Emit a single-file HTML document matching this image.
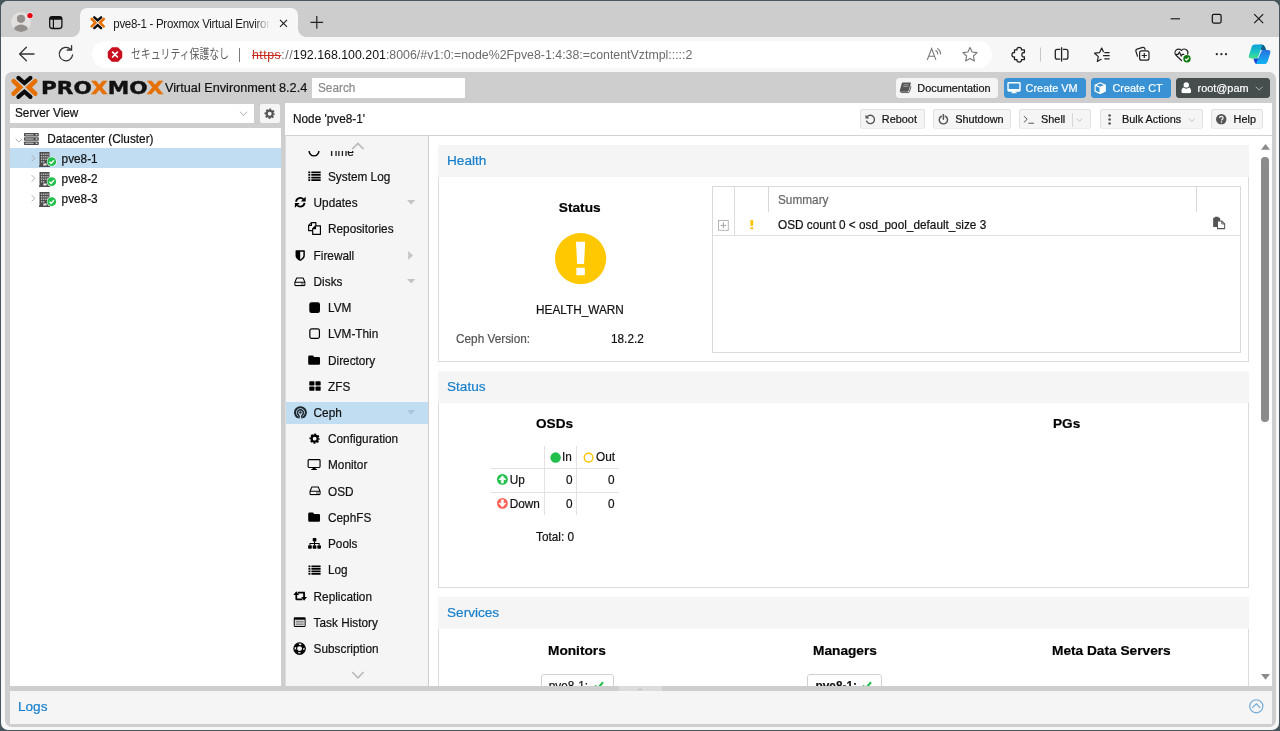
<!DOCTYPE html>
<html lang="ja">
<head>
<meta charset="utf-8">
<title>pve8-1 - Proxmox Virtual Environment</title>
<style>
*{box-sizing:border-box;margin:0;padding:0}
html,body{width:1280px;height:731px;overflow:hidden;background:#47555d}
body{font-family:"Liberation Sans","Noto Sans CJK JP",sans-serif;font-size:11.8px;color:#111;position:relative}
.a{position:absolute}
.t{position:absolute;white-space:pre;line-height:1}
svg{position:absolute;overflow:visible;fill:currentColor}
#win{will-change:transform;left:1px;top:1px;width:1278px;height:729px;border-radius:7px;background:#f7f7f7;overflow:hidden}
#win>.o{left:-1px;top:-1px;width:1280px;height:731px}
#tabbar{left:0;top:0;width:1280px;height:37px;background:#cdcdcd}
#tab{left:80px;top:8px;width:217.6px;height:30px;background:#f7f7f7;border-radius:7px 7px 0 0}
#tab:before,#tab:after{content:"";position:absolute;bottom:1px;width:8px;height:8px;background:radial-gradient(circle at 0 0,rgba(247,247,247,0) 7.5px,#f7f7f7 8px)}
#tab:before{left:-8px}
#tab:after{right:-8px;transform:scaleX(-1)}
#addr{left:92px;top:41px;width:900px;height:27px;border-radius:14px;background:#fff}
#page{left:5px;top:72px;width:1271px;height:655px;border-radius:7px;background:#cecece;overflow:hidden}
#page>.o{left:-5px;top:-72px;width:1280px;height:731px}
.btn{position:absolute;height:20px;border-radius:3px;background:#f5f5f5;border:1px solid #e1e1e1;border-bottom-color:#ececec;font-size:10.9px}
.nb{border-color:#f5f5f5}
.btn .t{top:2.6px}
.blue{background:#3892d4;border-color:#3892d4;color:#fff}
.dark{background:#464d4d;border-color:#464d4d;color:#fff}
.nav{position:absolute;left:286px;width:142px;height:21px}
.nav .t{top:5px;font-size:11.8px}
.nav.sel{background:#c1ddf1}
.hd{position:absolute;left:438px;width:811px;background:#f5f5f5;height:32px}
.hd .t{left:9px;top:9px;font-size:13.6px;color:#157fcc}
.pb{position:absolute;left:438px;width:811px;background:#fff;border:1px solid #dcdcdc;border-top:0}
.row{position:absolute;left:10px;width:271px;height:20px}
.row .t{top:4px;font-size:11.8px}
.h3{font-weight:bold;font-size:13.6px;color:#000}
#page .t{margin-top:1.3px;transform:scaleY(1.12);transform-origin:0 84.65%;-webkit-text-stroke:.2px}
#page .hd .t,#page .h3{margin-top:0;transform:none}
#page .btn .t{transform:scaleY(1.03)}
</style>
</head>
<body>
<svg width="0" height="0" style="position:absolute;left:-10px;top:-10px">
<defs>
<symbol id="i-list" viewBox="0 0 14 12"><path d="M0 .6h2.2v2H0zM3.4 .6H14v2H3.4zM0 3.5h2.2v2H0zM3.4 3.5H14v2H3.4zM0 6.4h2.2v2H0zM3.4 6.4H14v2H3.4zM0 9.3h2.2v2H0zM3.4 9.3H14v2H3.4z"/></symbol>
<symbol id="i-refresh" viewBox="0 0 14 14"><path d="M2.3 6.4A4.8 4.8 0 0 1 10.6 3.7" fill="none" stroke="currentColor" stroke-width="2"/><path d="M13 .8v5.4H7.6z"/><path d="M11.7 7.6A4.8 4.8 0 0 1 3.4 10.3" fill="none" stroke="currentColor" stroke-width="2"/><path d="M1 13.2V7.8h5.4z"/></symbol>
<symbol id="i-files" viewBox="0 0 14 14"><path d="M8.4 3.6V.7H3.7L.7 3.7v5.6h4.2M3.7 .7v3H.7M8 4.1h5.3v9.2H5V7.1zM8 4.1v3H5" fill="none" stroke="currentColor" stroke-width="1.25" stroke-linejoin="round"/></symbol>
<symbol id="i-shield" viewBox="0 0 12 13"><path fill-rule="evenodd" d="M.6 .8Q.6 .3 1.1 .3H10.9Q11.4 .3 11.4 .8V6.5C11.4 9.8 8.2 11.9 6 12.8C3.8 11.9 .6 9.8 .6 6.5ZM6 2.1V10.9C7.6 10.1 9.7 8.6 9.7 6.5V2.1Z"/></symbol>
<symbol id="i-hdd" viewBox="0 0 14 12"><path d="M3 1.2h8l2.3 5.3v3.3a1 1 0 0 1-1 1H1.7a1 1 0 0 1-1-1V6.5zM.9 6.6h12.2" fill="none" stroke="currentColor" stroke-width="1.3" stroke-linejoin="round"/><path d="M8.2 8.1h3.6v1.4H8.2z" opacity=".75"/></symbol>
<symbol id="i-square" viewBox="0 0 12 12"><rect x=".3" y=".3" width="11.4" height="11.4" rx="2.4"/></symbol>
<symbol id="i-square-o" viewBox="0 0 12 12"><rect x=".9" y=".9" width="10.2" height="10.2" rx="2" fill="none" stroke="currentColor" stroke-width="1.3"/></symbol>
<symbol id="i-folder" viewBox="0 0 14 12"><path d="M0 2.1A1.6 1.6 0 0 1 1.6 .5H5A1.6 1.6 0 0 1 6.6 2.1V2.5H12.4A1.6 1.6 0 0 1 14 4.1V10A1.6 1.6 0 0 1 12.4 11.6H1.6A1.6 1.6 0 0 1 0 10Z"/></symbol>
<symbol id="i-th" viewBox="0 0 14 12"><rect x=".2" y=".3" width="6.1" height="5" rx="1"/><rect x="7.5" y=".3" width="6.1" height="5" rx="1"/><rect x=".2" y="6.5" width="6.1" height="5" rx="1"/><rect x="7.5" y="6.5" width="6.1" height="5" rx="1"/></symbol>
<symbol id="i-ceph" viewBox="0 0 14 14"><g fill="none" stroke="currentColor" stroke-linecap="round"><path d="M3.6 12A5.9 5.9 0 1 1 10.4 12" stroke-width="2.2"/><path d="M5.3 12.8C6 11.5 5.7 10.6 5 9.800A3.200 3.200 0 1 1 9 9.800C8.300 10.600 8 11.500 8.700 12.800" stroke-width="1.600"/></g><circle cx="7" cy="7.100" r="1.300"/></symbol>
<symbol id="i-gear" viewBox="0 0 14 14"><circle cx="7" cy="7" r="3.75" fill="none" stroke="currentColor" stroke-width="2.7"/><circle cx="7" cy="7" r="5.4" fill="none" stroke="currentColor" stroke-width="2" stroke-dasharray="2.3 1.941" stroke-dashoffset="1.15"/></symbol>
<symbol id="i-desktop" viewBox="0 0 15 13"><path d="M1.7 .7h11.6a1 1 0 0 1 1 1v7a1 1 0 0 1-1 1H1.7a1 1 0 0 1-1-1v-7a1 1 0 0 1 1-1z" fill="none" stroke="currentColor" stroke-width="1.3"/><path d="M6 9.7h3l.4 1.8h1.3v1H4.3v-1h1.3z"/></symbol>
<symbol id="i-desktop-f" viewBox="0 0 15 13"><path d="M1.5 0h12A1.5 1.5 0 0 1 15 1.5v7.8a1.5 1.5 0 0 1-1.5 1.5H9.2l.3 1.1h1.2v1.1H4.3v-1.1h1.2l.3-1.1H1.5A1.5 1.5 0 0 1 0 9.3V1.5A1.5 1.5 0 0 1 1.5 0zM1.6 1.6v6.2h11.8V1.6z" fill-rule="evenodd"/></symbol>
<symbol id="i-sitemap" viewBox="0 0 14 12"><rect x="5" y="0" width="4" height="3.8" rx=".8"/><rect x="0" y="7.8" width="4" height="3.8" rx=".8"/><rect x="5" y="7.8" width="4" height="3.8" rx=".8"/><rect x="10" y="7.8" width="4" height="3.8" rx=".8"/><path d="M7 3.5v4.5M2 8V5.9h10V8" fill="none" stroke="currentColor" stroke-width="1.1"/></symbol>
<symbol id="i-retweet" viewBox="0 0 15 11"><path d="M3.2 9.7V3M5 1.8h6.7v4.6M11.8 8V1.8M10 9.3H3.2" fill="none" stroke="currentColor" stroke-width="1.9"/><path d="M0 4.3L3.2 .4l3.2 3.9zM15 6.7l-3.2 3.9-3.2-3.9z"/></symbol>
<symbol id="i-listalt" viewBox="0 0 14 12"><path fill-rule="evenodd" d="M1.3 .3h11.4a1.3 1.3 0 0 1 1.3 1.3v8.8a1.3 1.3 0 0 1-1.3 1.3H1.3A1.3 1.3 0 0 1 0 10.4V1.6A1.3 1.3 0 0 1 1.3 .3zM1.2 3.2v7.3h11.6V3.2z"/><path d="M2.2 4.4h9.6v1.3H2.2zM2.2 6.4h9.6v1.3H2.2zM2.2 8.4h9.6v1.3H2.2z" opacity=".55"/></symbol>
<symbol id="i-lifering" viewBox="0 0 14 14"><circle cx="7" cy="7" r="4.600" fill="none" stroke="currentColor" stroke-width="2.300" stroke-dasharray="4.726 2.500" stroke-dashoffset="-1.250"/><circle cx="7" cy="7" r="6" fill="none" stroke="currentColor" stroke-width="1.400"/><circle cx="7" cy="7" r="3.200" fill="none" stroke="currentColor" stroke-width="1.200"/></symbol>
<symbol id="i-clock" viewBox="0 0 14 14"><circle cx="7" cy="7" r="5.7" fill="none" stroke="currentColor" stroke-width="1.7"/></symbol>
<symbol id="i-book" viewBox="0 0 14 13"><path d="M4.3 .5h8.2c.7 0 1 .5.8 1.1L10.8 10c-.2.6-.8 1-1.4 1H2.3C1.4 11 .6 10.2.9 9.2L3 1.7C3.2 1 3.7.5 4.3.5z"/><path d="M1.3 10.6c.1.7.7 1.4 1.7 1.4h7.2c.7 0 1.2-.4 1.5-1.1l2-6.5" fill="none" stroke="currentColor" stroke-width="1.1"/><path d="M5.2 3.1h5.6M4.7 5h5.6" stroke="#f5f5f5" stroke-width=".7" opacity=".7"/></symbol>
<symbol id="i-cube" viewBox="0 0 14 14"><path fill-rule="evenodd" d="M7 .3L13.4 3v7.8L7 13.7.6 10.8V3zM7 1.8L2.9 3.5 7 5.3l4.1-1.8zM1.9 4.6v5.4L6.3 12V6.5z"/></symbol>
<symbol id="i-user" viewBox="0 0 12 13"><circle cx="6" cy="3.3" r="3.1"/><path d="M2.8 6.3c.9.9 2 1.3 3.2 1.3s2.3-.4 3.2-1.3c1.7.5 2.3 2.3 2.3 4.4 0 1.2-.8 2-1.9 2H2.4c-1.1 0-1.9-.8-1.9-2 0-2.1.6-3.9 2.3-4.4z"/></symbol>
<symbol id="i-undo" viewBox="0 0 13 13"><path d="M2.6 3.3A5 5 0 1 1 1.6 8" fill="none" stroke="currentColor" stroke-width="1.7"/><path d="M.6 .9v4.6h4.6z"/></symbol>
<symbol id="i-power" viewBox="0 0 13 13"><path d="M4 2.7A5 5 0 1 0 9 2.7" fill="none" stroke="currentColor" stroke-width="1.8" stroke-linecap="round"/><path d="M6.5 .7v5.5" stroke="currentColor" stroke-width="1.8" stroke-linecap="round"/></symbol>
<symbol id="i-term" viewBox="0 0 13 10"><path d="M1 1.2l3.8 3.5L1 8.2M6 9.2h6.5" fill="none" stroke="currentColor" stroke-width="1.1"/></symbol>
<symbol id="i-dots" viewBox="0 0 3 11"><circle cx="1.5" cy="1.5" r="1.3"/><circle cx="1.5" cy="5.5" r="1.3"/><circle cx="1.5" cy="9.5" r="1.3"/></symbol>
<symbol id="i-chev" viewBox="0 0 10 6"><path d="M.8 .8L5 5 9.2 .8" fill="none" stroke="currentColor" stroke-width="1.1"/></symbol>
<symbol id="i-help" viewBox="0 0 12 12"><circle cx="6" cy="6" r="6"/><path d="M4.100 4.600c0-1.100.8-1.900 2-1.900 1.100 0 1.900.7 1.900 1.700 0 1.500-1.700 1.500-1.700 2.900" fill="none" stroke="#f5f5f5" stroke-width="1.400"/><circle cx="6.200" cy="9.100" r=".85" fill="#f5f5f5"/></symbol>
<symbol id="i-node" viewBox="0 0 18 15"><path d="M.5 0h10v14H.5z" fill="#4d4d4d"/><path d="M0 13.600h11V15H0z" fill="#4d4d4d"/><g fill="#b9b9b9"><path d="M2 1.500h1.300v1.600H2zM4.100 1.500h1.300v1.600H4.100zM6.200 1.500h1.300v1.600H6.200zM8.300 1.500h1.300v1.600H8.300zM2 4h1.300v1.600H2zM4.100 4h1.300v1.600H4.100zM6.200 4h1.300v1.600H6.200zM8.300 4h1.300v1.600H8.300zM2 6.500h1.300v1.600H2zM4.100 6.500h1.300v1.600H4.100zM6.200 6.500h1.300v1.600H6.200zM8.300 6.500h1.300v1.600H8.300zM2 9h1.300v1.600H2zM4.100 9h1.300v1.600H4.100z"/></g><path d="M4.300 11.600h3.300v2H4.300z" fill="#eee"/><circle cx="12.700" cy="9.700" r="4.900" fill="#fff"/><circle cx="12.700" cy="9.700" r="4.400" fill="#21bf4b"/><path d="M10.500 9.800l1.600 1.600 2.900-3.100" fill="none" stroke="#fff" stroke-width="1.400"/></symbol>
</defs>
</svg>
<div id="win" class="a"><div class="o a">
<div id="tabbar" class="a"></div>
<div id="tab" class="a"></div>
<div class="t" style="left:113.3px;top:18.5px;font-size:11.5px;letter-spacing:-0.3px;color:#1b1b1b;transform:scaleY(1.1);transform-origin:0 84.65%">pve8-1 - Proxmox Virtual Environ</div>
<div class="a" style="left:254px;top:12px;width:19px;height:22px;background:linear-gradient(to right,rgba(247,247,247,0),#f7f7f7 85%)"></div>
<div id="addr" class="a"></div>
<div class="t" style="left:130.5px;top:47.6px;font-size:12.8px;color:#5f5f5f;transform-origin:0 50%;transform:scaleX(.77)">セキュリティ保護なし</div>
<div class="a" style="left:239.4px;top:48px;width:1.1px;height:13.6px;background:#7a7a7a"></div>
<div class="t" style="left:252px;top:48.6px;font-size:12.36px;color:#6b6b6b"><span style="letter-spacing:.5px"><span style="color:#c42b1c;text-decoration:line-through">https</span>://</span><span style="color:#111">192.168.100.201</span>:8006/#v1:0:=node%2Fpve8-1:4:38:=contentVztmpl:::::2</div>
<svg style="left:0;top:0;width:1280px;height:72px" viewBox="0 0 1280 72">
<!-- profile -->
<clipPath id="pc"><circle cx="21" cy="22" r="10"/></clipPath>
<circle cx="21" cy="22" r="10" fill="#e2e0de"/>
<g clip-path="url(#pc)" fill="#918e8b"><circle cx="21" cy="18.800" r="4.100"/><ellipse cx="21" cy="30.200" rx="7.200" ry="5.600"/></g>
<circle cx="30" cy="15.600" r="3.400" fill="#e3eeee"/><circle cx="30" cy="15.600" r="2.700" fill="#e60012"/>
<!-- tab actions -->
<rect x="49.700" y="16.700" width="12.200" height="11.800" rx="2.400" fill="none" stroke="#111" stroke-width="1.300"/>
<path d="M50 19.800v-1a2.200 2.200 0 0 1 2.200-2.200h7.300a2.200 2.200 0 0 1 2.200 2.200v1z" fill="#111"/>
<path d="M53.400 19v9.400" stroke="#111" stroke-width="1.200"/>
<!-- favicon -->
<g fill="none" stroke-linecap="round" stroke-linejoin="miter"><path d="M94.300 17.300L97.700 20.400L101.100 17.300M94.300 28.100L97.700 25L101.100 28.100" stroke="#0b0b0b" stroke-width="2.400"/><path d="M91.700 19L95.400 22.700L91.700 26.400M103.700 19L100 22.700L103.700 26.400" stroke="#e57000" stroke-width="2.600"/></g>
<!-- tab close, new tab -->
<path d="M280 19.800l7 7M287 19.800l-7 7" stroke="#222" stroke-width="1.200" fill="none"/>
<path d="M310.500 22.400h12.600M316.800 16.100v12.600" stroke="#222" stroke-width="1.200" fill="none"/>
<!-- back, refresh -->
<path d="M34 54H19.800M26.400 47.200L19.600 54l6.800 6.800" stroke="#333" stroke-width="1.300" fill="none" stroke-linecap="round" stroke-linejoin="round"/>
<path d="M72.600 54.800a6.700 6.700 0 1 1-2-5.500" stroke="#333" stroke-width="1.300" fill="none" stroke-linecap="round"/>
<path d="M71.600 45.600v4.400h-4.400" stroke="#333" stroke-width="1.300" fill="none" stroke-linecap="round" stroke-linejoin="round"/>
<!-- not secure -->
<polygon points="121.56,57.32 117.72,61.16 112.28,61.16 108.44,57.32 108.44,51.88 112.28,48.04 117.72,48.04 121.56,51.88" fill="#c8101e" stroke="#c8101e" stroke-width="1.400" stroke-linejoin="round"/>
<path d="M112.600 52.200l4.800 4.800M117.400 52.200l-4.800 4.800" stroke="#fff" stroke-width="1.700" stroke-linecap="round"/>
<!-- read aloud -->
<g stroke="#777" fill="none" stroke-width="1.100" stroke-linecap="round"><path d="M927.400 59.600l4.200-11 4.200 11M928.700 56.200h5.800"/><path d="M935.800 50.500a4 4 0 0 1 2 3.400M937.600 48.600a6.400 6.400 0 0 1 3 5.300M936.800 47.200"/></g>
<!-- star -->
<path d="M970 47.400l2.100 4.600 5 .6-3.700 3.400 1 4.900-4.400-2.500-4.400 2.500 1-4.900-3.700-3.400 5-.6z" fill="none" stroke="#777" stroke-width="1.100" stroke-linejoin="round"/>
<!-- extensions -->
<path d="M1014.500 49.900h2.500c-.8-3.300 5.200-3.300 4.400 0h3v2.700c-3.400-.8-3.400 5.200 0 4.400v2.700h-3c.8 3.300-5.200 3.300-4.400 0h-2.500v-2.700c-3.400.8-3.400-5.200 0-4.400z" fill="none" stroke="#222" stroke-width="1.300" stroke-linejoin="round"/>
<path d="M1040.500 47.500v14" stroke="#c6c6c6" stroke-width="1"/>
<!-- split screen -->
<g fill="none" stroke="#222" stroke-width="1.300"><path d="M1060.300 49.400h-3.100a1.900 1.900 0 0 0-1.900 1.900v5.900a1.900 1.900 0 0 0 1.900 1.900h3.100M1062.900 49.400h3.100a1.900 1.900 0 0 1 1.900 1.900v5.900a1.900 1.900 0 0 1-1.900 1.900h-3.100M1061.600 47.200v14.200"/></g>
<!-- favorites -->
<g fill="none" stroke="#222" stroke-width="1.200" stroke-linejoin="round" stroke-linecap="round"><path d="M1103.400 51.700l-1.700-3.700-2.100 4.600-5 .6 3.700 3.400-1 4.900 3.800-2.200"/><path d="M1104.800 52.600h4.400M1103.500 55.700h5.700M1104.800 58.800h4.400"/></g>
<!-- collections -->
<g fill="none" stroke="#222" stroke-width="1.200" stroke-linejoin="round"><path d="M1137.600 56.600l-1.700-5.400a1.700 1.700 0 0 1 1.100-2.100l5.700-1.700a1.700 1.700 0 0 1 2.100 1.100l.4 1.300"/><rect x="1139.600" y="50.800" width="9.400" height="9.400" rx="2"/><path d="M1144.300 52.900v5.200M1141.700 55.500h5.200"/></g>
<!-- browser essentials -->
<g fill="none" stroke="#222" stroke-width="1.200" stroke-linejoin="round" stroke-linecap="round"><path d="M1181.500 60.500l-5.400-5.300a3.600 3.600 0 0 1 5.100-5.100l.3.400.3-.4a3.600 3.600 0 0 1 5.800 4"/><path d="M1175.600 54.300h2.600l1.200-2.400 1.800 4.200 1.100-1.800h1.500"/></g>
<circle cx="1187" cy="58.800" r="3.700" fill="#107c10"/><path d="M1185.200 58.900l1.300 1.300 2.400-2.500" fill="none" stroke="#fff" stroke-width="1.100"/>
<!-- more -->
<g fill="#222"><circle cx="1216.800" cy="54.200" r="1.100"/><circle cx="1221.400" cy="54.200" r="1.100"/><circle cx="1226" cy="54.200" r="1.100"/></g>
<!-- copilot -->
<defs><linearGradient id="cg1" x1="0" y1="0" x2="0" y2="1"><stop offset="0" stop-color="#0ea2dc"/><stop offset=".55" stop-color="#1cc4c0"/><stop offset="1" stop-color="#45e488"/></linearGradient><linearGradient id="cg2" x1="0" y1="0" x2="0" y2="1"><stop offset="0" stop-color="#2b72dc"/><stop offset="1" stop-color="#10b4f6"/></linearGradient></defs>
<path d="M1259.800 44.500c2.600-.4 4.600.4 5.300 2.400l1.200 3.400h-5.200z" fill="#0b5f8e"/>
<path d="M1253.200 58.200h5.600l-1.300 5.800c-1.400 0-2.300-.5-2.800-1.800z" fill="#1b3fd8"/>
<path d="M1254.800 44.500h5.800c1.200 0 1.700.8 1.300 2l-3.700 10.200c-.5 1.300-1.400 1.900-2.700 1.900h-4.300c-1.800 0-2.800-1.300-2.300-3.100l2.600-8.200c.6-1.900 1.600-2.800 3.300-2.800z" fill="url(#cg1)"/>
<path d="M1264 50h4c1.800 0 2.800 1.300 2.300 3.100l-2.600 8.200c-.6 1.900-1.600 2.800-3.300 2.800h-6.900c-1 0-1.400-.7-1-1.800l4.500-10.400c.6-1.300 1.500-1.900 3-1.900z" fill="url(#cg2)"/>
<!-- window controls -->
<path d="M1170.600 18.800h9.400" stroke="#111" stroke-width="1.100"/>
<rect x="1212.300" y="14.300" width="8.800" height="8.800" rx="1.500" fill="none" stroke="#111" stroke-width="1.200"/>
<path d="M1254.200 14.200l9 9M1263.200 14.200l-9 9" stroke="#111" stroke-width="1.100"/>
</svg>

<div id="page" class="a"><div class="o a">
<svg style="left:11px;top:74.500px;width:27px;height:24px" viewBox="0 0 27 24">
<g fill="none" stroke-linecap="round" stroke-linejoin="miter" stroke-miterlimit="10">
<path d="M7.400 2.900L13.400 8L19.400 2.900M7.400 21.800L13.400 16.700L19.400 21.800" stroke="#0b0b0b" stroke-width="4.200"/>
<path d="M2.600 6.100L9.100 12.350L2.600 18.600M24.200 6.100L17.700 12.350L24.200 18.600" stroke="#e57000" stroke-width="4.600"/>
</g>
</svg>
<div class="t" id="pmx" style="left:40.600px;top:77.400px;font-family:'DejaVu Sans',sans-serif;font-weight:bold;font-size:17.800px;transform-origin:0 50%;transform:scaleX(1.215);color:#111;-webkit-text-stroke:.4px">PRO<span style="color:#e57000">X</span>MO<span style="color:#e57000">X</span></div>

<div class="t" style="left:165px;top:81px;font-size:12.7px;transform:none">Virtual Environment 8.2.4</div>
<div class="a" style="left:312px;top:77.5px;width:153px;height:20px;background:#fff"></div>
<div class="t" style="left:318px;top:82px;color:#8a8a8a">Search</div>
<div class="btn nb" style="left:895.5px;top:77.8px;width:102.3px;height:20px"><div class="t" style="left:20.8px">Documentation</div></div>
<svg style="left:899px;top:82px;width:12.5px;height:11.5px;color:#555"><use href="#i-book"/></svg>
<div class="btn blue" style="left:1003.6px;top:77.8px;width:82px;height:20px"><div class="t" style="left:21.0px">Create VM</div></div>
<svg style="left:1007px;top:81.8px;width:14px;height:11.6px;color:#fff"><use href="#i-desktop-f"/></svg>
<div class="btn blue" style="left:1090.6px;top:77.8px;width:80px;height:20px"><div class="t" style="left:20.9px">Create CT</div></div>
<svg style="left:1094.2px;top:81.5px;width:12.4px;height:12.4px;color:#fff"><use href="#i-cube"/></svg>
<div class="btn dark" style="left:1176px;top:77.8px;width:94.4px;height:20px"><div class="t" style="left:20.5px">root@pam</div></div>
<svg style="left:1180.8px;top:81.8px;width:10.6px;height:11.4px;color:#fff"><use href="#i-user"/></svg>
<svg style="left:1255px;top:86px;width:8.4px;height:5px;color:#b8bcbc"><use href="#i-chev"/></svg>
<div class="a" style="left:10px;top:103.5px;width:244px;height:19.5px;background:#fff"></div>
<div class="t" style="left:15px;top:107px;">Server View</div>
<svg style="left:238.5px;top:110.5px;width:9px;height:5.2px;color:#a8a8a8"><use href="#i-chev"/></svg>
<div class="a" style="left:260px;top:103.5px;width:20px;height:19.5px;background:#f5f5f5;border-radius:2px"></div>
<svg style="left:264.3px;top:107.5px;width:11.4px;height:11.4px;color:#555"><use href="#i-gear"/></svg>
<div class="a" style="left:10px;top:128.4px;width:271px;height:558px;background:#fff"></div>
<svg style="left:14.6px;top:137.8px;width:7.8px;height:5px;color:#9a9a9a"><use href="#i-chev"/></svg>
<svg style="left:24.200px;top:133px;width:14.800px;height:12px" viewBox="0 0 15 12"><g fill="#4d4d4d"><rect x="0" y="0" width="15" height="3.400" rx=".8"/><rect x="0" y="4.300" width="15" height="3.400" rx=".8"/><rect x="0" y="8.600" width="15" height="3.400" rx=".8"/></g><g fill="#bbb"><rect x="1.200" y="1.100" width="8.500" height="1.200"/><rect x="1.200" y="5.400" width="8.500" height="1.200"/><rect x="1.200" y="9.700" width="8.500" height="1.200"/><rect x="11.800" y="1.100" width="1.800" height="1.200" fill="#eee"/><rect x="11.800" y="5.400" width="1.800" height="1.200" fill="#eee"/><rect x="11.800" y="9.700" width="1.800" height="1.200" fill="#eee"/></g></svg>

<div class="t" style="left:47.3px;top:132.3px;">Datacenter (Cluster)</div>
<div class="a" style="left:10px;top:148.4px;width:271px;height:19.6px;background:#c1ddf1"></div>
<div class="t" style="left:61.6px;top:152.8px;">pve8-1</div>
<svg style="left:31.3px;top:154.3px;width:4.6px;height:8.6px;color:#a8a8a8" viewBox="0 0 6 10"><path d="M.8 .8L5 5 .8 9.200" fill="none" stroke="currentColor" stroke-width="1.200"/></svg>
<svg style="left:39px;top:152.0px;width:18px;height:15px"><use href="#i-node"/></svg>
<div class="t" style="left:61.6px;top:172.65px;">pve8-2</div>
<svg style="left:31.3px;top:174.2px;width:4.6px;height:8.6px;color:#a8a8a8" viewBox="0 0 6 10"><path d="M.8 .8L5 5 .8 9.200" fill="none" stroke="currentColor" stroke-width="1.200"/></svg>
<svg style="left:39px;top:171.8px;width:18px;height:15px"><use href="#i-node"/></svg>
<div class="t" style="left:61.6px;top:192.50000000000003px;">pve8-3</div>
<svg style="left:31.3px;top:194.0px;width:4.6px;height:8.6px;color:#a8a8a8" viewBox="0 0 6 10"><path d="M.8 .8L5 5 .8 9.200" fill="none" stroke="currentColor" stroke-width="1.200"/></svg>
<svg style="left:39px;top:191.7px;width:18px;height:15px"><use href="#i-node"/></svg>
<div class="a" style="left:285px;top:102.6px;width:986.6px;height:583.4px;background:#fff"></div>
<div class="t" style="left:293px;top:112.5px;">Node 'pve8-1'</div>
<div class="a" style="left:285px;top:135px;width:986.6px;height:1px;background:#d2d2d2"></div>
<div class="btn " style="left:859.5px;top:109.3px;width:65px;height:20px"><div class="t" style="left:21.3px">Reboot</div></div>
<svg style="left:864.6px;top:113.6px;width:10.8px;height:10.8px;color:#555"><use href="#i-undo"/></svg>
<div class="btn " style="left:933.4px;top:109.3px;width:78px;height:20px"><div class="t" style="left:20.8px">Shutdown</div></div>
<svg style="left:938px;top:113.6px;width:10.8px;height:10.8px;color:#555"><use href="#i-power"/></svg>
<div class="btn " style="left:1019px;top:109.3px;width:72px;height:20px"><div class="t" style="left:21.0px">Shell</div></div>
<svg style="left:1023.3px;top:115px;width:11.5px;height:9px;color:#555"><use href="#i-term"/></svg>
<div class="a" style="left:1071.7px;top:112.5px;width:1px;height:14px;background:#d6d6d6"></div>
<svg style="left:1076.3px;top:117.5px;width:7px;height:4px;color:#b0b0b0"><use href="#i-chev"/></svg>
<div class="btn " style="left:1099.5px;top:109.3px;width:103.5px;height:20px"><div class="t" style="left:21.4px">Bulk Actions</div></div>
<svg style="left:1108.2px;top:113.8px;width:3.2px;height:11px;color:#555"><use href="#i-dots"/></svg>
<svg style="left:1188px;top:117.5px;width:7.6px;height:4.2px;color:#b0b0b0"><use href="#i-chev"/></svg>
<div class="btn " style="left:1210.7px;top:109.3px;width:52.2px;height:20px"><div class="t" style="left:21.9px">Help</div></div>
<svg style="left:1215.9px;top:114.2px;width:10.6px;height:10.6px;color:#555"><use href="#i-help"/></svg>
<div class="a" style="left:285px;top:136px;width:143.4px;height:550px;background:#f5f5f5;border-left:1px solid #dcdcdc"></div>
<div class="a" style="left:428.4px;top:136px;width:1px;height:550px;background:#cfcfcf"></div>
<div class="t" style="left:328px;top:145.7px;">Time</div>
<svg style="left:308.2px;top:145.4px;width:12px;height:12px;color:#000"><use href="#i-clock"/></svg>
<div class="a" style="left:286px;top:136px;width:142.4px;height:14.8px;background:#f5f5f5"></div>
<svg style="left:350.6px;top:142px;width:13.8px;height:8.2px;color:#b8b8b8;transform:scaleY(-1)"><use href="#i-chev"/></svg>
<div class="t" style="left:328px;top:170.72px;">System Log</div>
<svg style="left:308px;top:171.1px;width:13px;height:10.6px;color:#000"><use href="#i-list"/></svg>
<div class="t" style="left:313.6px;top:196.94px;">Updates</div>
<svg style="left:293.6px;top:196.3px;width:12.6px;height:12.6px;color:#000"><use href="#i-refresh"/></svg>
<div class="t" style="left:328px;top:223.16px;">Repositories</div>
<svg style="left:307.8px;top:221.6px;width:13.1px;height:13.1px;color:#000"><use href="#i-files"/></svg>
<div class="t" style="left:313.6px;top:249.38px;">Firewall</div>
<svg style="left:294.8px;top:249.5px;width:10.4px;height:11.2px;color:#000"><use href="#i-shield"/></svg>
<div class="t" style="left:313.6px;top:275.6px;">Disks</div>
<svg style="left:294px;top:276.5px;width:11.8px;height:9.6px;color:#000"><use href="#i-hdd"/></svg>
<div class="t" style="left:328px;top:301.82000000000005px;">LVM</div>
<svg style="left:308.9px;top:301.9px;width:11.3px;height:11.3px;color:#000"><use href="#i-square"/></svg>
<div class="t" style="left:328px;top:328.04px;">LVM-Thin</div>
<svg style="left:308.9px;top:328.1px;width:11.3px;height:11.3px;color:#000"><use href="#i-square-o"/></svg>
<div class="t" style="left:328px;top:354.26px;">Directory</div>
<svg style="left:308.3px;top:354.9px;width:12.3px;height:10.2px;color:#000"><use href="#i-folder"/></svg>
<div class="t" style="left:328px;top:380.48px;">ZFS</div>
<svg style="left:308.5px;top:381.1px;width:12.1px;height:10.2px;color:#000"><use href="#i-th"/></svg>
<div class="a" style="left:286px;top:402.3px;width:142.4px;height:21.4px;background:#c1ddf1"></div>
<div class="t" style="left:313.6px;top:406.70000000000005px;">Ceph</div>
<svg style="left:293.9px;top:406.0px;width:12.9px;height:12.9px;color:#1c262c"><use href="#i-ceph"/></svg>
<div class="t" style="left:328px;top:432.91999999999996px;">Configuration</div>
<svg style="left:308.9px;top:433.0px;width:11.3px;height:11.3px;color:#000"><use href="#i-gear"/></svg>
<div class="t" style="left:328px;top:459.14px;">Monitor</div>
<svg style="left:306.9px;top:459.1px;width:14.2px;height:11.4px;color:#000"><use href="#i-desktop"/></svg>
<div class="t" style="left:328px;top:485.36px;">OSD</div>
<svg style="left:308.5px;top:486.3px;width:12.1px;height:9.6px;color:#000"><use href="#i-hdd"/></svg>
<div class="t" style="left:328px;top:511.58000000000004px;">CephFS</div>
<svg style="left:308.3px;top:512.2px;width:12.3px;height:10.2px;color:#000"><use href="#i-folder"/></svg>
<div class="t" style="left:328px;top:537.8px;">Pools</div>
<svg style="left:307.8px;top:538.0px;width:13.1px;height:11px;color:#000"><use href="#i-sitemap"/></svg>
<div class="t" style="left:328px;top:564.02px;">Log</div>
<svg style="left:307.8px;top:564.5px;width:13.1px;height:10.4px;color:#000"><use href="#i-list"/></svg>
<div class="t" style="left:313.6px;top:590.24px;">Replication</div>
<svg style="left:292.9px;top:590.9px;width:14.4px;height:10px;color:#000"><use href="#i-retweet"/></svg>
<div class="t" style="left:313.6px;top:616.46px;">Task History</div>
<svg style="left:293.1px;top:617.1px;width:13.4px;height:10.2px;color:#000"><use href="#i-listalt"/></svg>
<div class="t" style="left:313.6px;top:642.68px;">Subscription</div>
<svg style="left:293.1px;top:641.8px;width:13.2px;height:13.2px;color:#000"><use href="#i-lifering"/></svg>
<svg style="left:406.8px;top:200.44px;width:8.4px;height:4.6px;color:#c4c4c4" viewBox="0 0 8 4.4"><path d="M0 0h8L4 4.400z"/></svg>
<svg style="left:408.0px;top:250.98px;width:5.2px;height:8.8px;color:#c4c4c4" viewBox="0 0 4.4 8"><path d="M0 0v8L4.400 4z"/></svg>
<svg style="left:406.8px;top:279.09999999999997px;width:8.4px;height:4.6px;color:#c4c4c4" viewBox="0 0 8 4.4"><path d="M0 0h8L4 4.400z"/></svg>
<svg style="left:406.8px;top:410.2px;width:8.4px;height:4.6px;color:#a9c4dc" viewBox="0 0 8 4.4"><path d="M0 0h8L4 4.400z"/></svg>
<svg style="left:350.6px;top:671.4px;width:13.8px;height:8.2px;color:#b8b8b8"><use href="#i-chev"/></svg>
<div class="hd" style="top:145px;height:32px"><div class="t">Health</div></div>
<div class="pb" style="top:177px;height:184.800px"></div>
<div class="t h3" style="left:558.800px;top:200.500px;font-size:13.700px">Status</div>
<svg style="left:554.800px;top:232.800px;width:51.200px;height:51.200px" viewBox="0 0 52 52"><circle cx="26" cy="26" r="26" fill="#ffc800"/><path d="M21.300 8.800h9.400l-1.200 22.800h-7zM21.700 35.400h8.600v7.600h-8.600z" fill="#fff"/></svg>
<div class="t" style="left:536px;top:304.200px">HEALTH_WARN</div>
<div class="t" style="left:456px;top:332.300px;color:#555">Ceph Version:</div>
<div class="t" style="left:611px;top:332.300px">18.2.2</div>
<div class="a" style="left:712.400px;top:186px;width:528.400px;height:167.400px;border:1px solid #dadada"></div>
<div class="a" style="left:734px;top:187px;width:1px;height:48px;background:#dcdcdc"></div>
<div class="a" style="left:768px;top:187px;width:1px;height:25.400px;background:#d8d8d8"></div>
<div class="a" style="left:1195.600px;top:187px;width:1px;height:25.400px;background:#d8d8d8"></div>
<div class="a" style="left:713.400px;top:235px;width:526.400px;height:1px;background:#dedede"></div>
<div class="t" style="left:778px;top:194.200px;color:#666">Summary</div>
<div class="t" style="left:778px;top:219.200px">OSD count 0 &lt; osd_pool_default_size 3</div>
<svg style="left:717.600px;top:219.800px;width:10.800px;height:10.800px" viewBox="0 0 11 11"><rect x=".5" y=".5" width="10" height="10" fill="#fff" stroke="#b4b4b4" stroke-width="1"/><path d="M2.600 5.500h5.800M5.500 2.600v5.800" stroke="#a0a0a0" stroke-width="1"/></svg>
<svg style="left:749.600px;top:219.800px;width:3.600px;height:9.600px" viewBox="0 0 4 10"><path d="M.2 0h3.600l-.6 6.400H.8zM.5 7.600h3V10h-3z" fill="#ffc000"/></svg>
<svg style="left:1212px;top:216.200px;width:13.600px;height:13.200px" viewBox="0 0 14 14"><path d="M1 1.800h7.400v10H1z" fill="#555"/><path d="M2.800 .8h3.800v1.600H2.800z" fill="#555"/><path d="M5.600 5.400h4.600l3 3v5H5.600z" fill="#fff" stroke="#555" stroke-width="1.100" stroke-linejoin="round"/><path d="M10.200 5.400v3h3" fill="none" stroke="#555" stroke-width="1"/></svg>

<div class="hd" style="top:371px;height:32px"><div class="t">Status</div></div>
<div class="pb" style="top:403px;height:184.800px"></div>
<div class="t h3" style="left:536px;top:417.300px">OSDs</div>
<div class="t h3" style="left:1053px;top:417.300px">PGs</div>
<div class="a" style="left:544px;top:446px;width:1px;height:69px;background:#e2e2e2"></div>
<div class="a" style="left:576.400px;top:446px;width:1px;height:69px;background:#e2e2e2"></div>
<div class="a" style="left:491px;top:468.400px;width:127px;height:1px;background:#e2e2e2"></div>
<div class="a" style="left:491px;top:492px;width:127px;height:1px;background:#e2e2e2"></div>
<svg style="left:549.800px;top:451.500px;width:11.200px;height:11.200px" viewBox="0 0 12 12"><circle cx="6" cy="6" r="5.600" fill="#21bf4b"/></svg>
<svg style="left:582.600px;top:451.500px;width:11.200px;height:11.200px" viewBox="0 0 12 12"><circle cx="6" cy="6" r="4.700" fill="none" stroke="#ffc400" stroke-width="1.500"/></svg>
<svg style="left:496.800px;top:474.100px;width:10.800px;height:10.800px" viewBox="0 0 12 12"><circle cx="6" cy="6" r="6" fill="#21bf4b"/><path d="M6 1.900L10 6.300H7.200V10H4.800V6.300H2z" fill="#fff" stroke="#fff" stroke-width=".6" stroke-linejoin="round"/></svg>
<svg style="left:496.800px;top:498px;width:10.800px;height:10.800px" viewBox="0 0 12 12"><circle cx="6" cy="6" r="6" fill="#f85f55"/><path d="M6 10.100L10 5.700H7.200V2H4.800V5.700H2z" fill="#fff" stroke="#fff" stroke-width=".6" stroke-linejoin="round"/></svg>
<div class="t" style="left:561.900px;top:450.800px">In</div>
<div class="t" style="left:596px;top:450.800px">Out</div>
<div class="t" style="left:509.700px;top:474px">Up</div>
<div class="t" style="left:509.700px;top:497.600px">Down</div>
<div class="t" style="left:566px;top:474px">0</div>
<div class="t" style="left:608px;top:474px">0</div>
<div class="t" style="left:566px;top:497.600px">0</div>
<div class="t" style="left:608px;top:497.600px">0</div>
<div class="t" style="left:536px;top:531.200px">Total: 0</div>

<div class="hd" style="top:597px;height:32.400px"><div class="t">Services</div></div>
<div class="pb" style="top:629.400px;height:80px"></div>
<div class="t h3" style="left:548px;top:643.900px;font-size:13.700px">Monitors</div>
<div class="t h3" style="left:813px;top:643.900px;font-size:13.700px">Managers</div>
<div class="t h3" style="left:1052px;top:643.900px;font-size:13.700px">Meta Data Servers</div>
<div class="a" style="left:541px;top:674.400px;width:73.200px;height:30px;border:1px solid #d2d2d2;border-radius:3px"></div>
<div class="a" style="left:807.400px;top:674.400px;width:74.800px;height:30px;border:1px solid #d2d2d2;border-radius:3px"></div>
<div class="t" style="left:548.700px;top:679.600px">pve8-1:</div>
<div class="t" style="left:815.600px;top:679.600px;font-weight:bold">pve8-1:</div>
<svg style="left:593.800px;top:681.300px;width:10px;height:8.600px" viewBox="0 0 11 9"><path d="M1 4.800l3 3 6-6.600" fill="none" stroke="#21bf4b" stroke-width="2.200"/></svg>
<svg style="left:862.200px;top:681.300px;width:10px;height:8.600px" viewBox="0 0 11 9"><path d="M1 4.800l3 3 6-6.600" fill="none" stroke="#21bf4b" stroke-width="2.200"/></svg>

<div class="a" style="left:1259px;top:136px;width:12.6px;height:550px;background:#fff"></div>
<svg style="left:1260.7px;top:143.6px;width:9px;height:5.8px;color:#8b8b8b" viewBox="0 0 8 5" preserveAspectRatio="none"><path d="M0 5h8L4 0z"/></svg>
<svg style="left:1260.7px;top:673.8px;width:9px;height:5.8px;color:#8b8b8b" viewBox="0 0 8 5" preserveAspectRatio="none"><path d="M0 0h8L4 5z"/></svg>
<div class="a" style="left:1261.4px;top:156.8px;width:7.4px;height:265px;border-radius:3.700px;background:#8b8b8b"></div>
<div class="a" style="left:5px;top:686px;width:1271px;height:5px;background:#cecece"></div>
<div class="a" style="left:619px;top:686px;width:43px;height:5px;background:#dcdcdc"></div>
<svg style="left:637px;top:687.500px;width:6px;height:2.400px;color:#c4c4c4" viewBox="0 0 8 3"><path d="M0 3h8L4 0z"/></svg>
<div class="a" style="left:10px;top:690.6px;width:1261.6px;height:33.2px;background:#f5f5f5"></div>
<div class="t" style="left:18px;top:699px;font-size:13.6px;color:#157fcc;transform:none">Logs</div>
<svg style="left:1249.200px;top:699.200px;width:14.600px;height:14.600px;color:#6ea8d8" viewBox="0 0 16 16"><circle cx="8" cy="8" r="7.200" fill="none" stroke="currentColor" stroke-width="1.300"/><path d="M3.600 9.800L8 5.400l4.400 4.400" fill="none" stroke="currentColor" stroke-width="1.300"/></svg>
</div></div>
</div></div>
</body>
</html>
